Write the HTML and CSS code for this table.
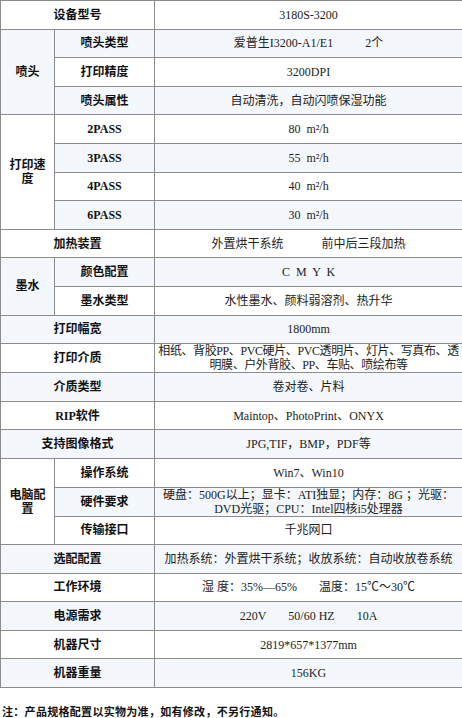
FILE: index.html
```html
<!DOCTYPE html>
<html lang="zh-CN">
<head>
<meta charset="utf-8">
<title>3180S-3200 参数</title>
<link rel="stylesheet" href="styles.css">
</head>
<body>
<div class="wrap">
<table class="spec">
<colgroup><col class="c1"><col class="c2"><col class="c3"></colgroup>
<tr><th colspan="2">设备型号</th><td>3180S-3200</td></tr>
<tr class="b"><th rowspan="3">喷头</th><th>喷头类型</th><td>爱普生I3200-A1/E1<span class="gap"></span>2个</td></tr>
<tr><th>打印精度</th><td>3200DPI</td></tr>
<tr class="b"><th>喷头属性</th><td>自动清洗，自动闪喷保湿功能</td></tr>
<tr><th rowspan="4" class="nar">打印速度</th><th>2PASS</th><td>80&nbsp;&nbsp;m²/h</td></tr>
<tr class="b"><th>3PASS</th><td>55&nbsp;&nbsp;m²/h</td></tr>
<tr><th>4PASS</th><td>40&nbsp;&nbsp;m²/h</td></tr>
<tr class="b"><th>6PASS</th><td>30&nbsp;&nbsp;m²/h</td></tr>
<tr><th colspan="2">加热装置</th><td>外置烘干系统<span class="gap2"></span>前中后三段加热</td></tr>
<tr class="b"><th rowspan="2">墨水</th><th>颜色配置</th><td class="cmyk">C M Y K</td></tr>
<tr><th>墨水类型</th><td>水性墨水、颜料弱溶剂、热升华</td></tr>
<tr class="b"><th colspan="2">打印幅宽</th><td>1800mm</td></tr>
<tr><th colspan="2">打印介质</th><td class="multi media">相纸、背胶PP、PVC硬片、PVC透明片、灯片、写真布、透明膜、户外背胶、PP、车贴、喷绘布等</td></tr>
<tr class="b"><th colspan="2">介质类型</th><td>卷对卷、片料</td></tr>
<tr><th colspan="2">RIP软件</th><td>Maintop、PhotoPrint、ONYX</td></tr>
<tr class="b"><th colspan="2">支持图像格式</th><td>JPG,TIF，BMP，PDF等</td></tr>
<tr><th rowspan="3" class="nar">电脑配置</th><th>操作系统</th><td>Win7、Win10</td></tr>
<tr class="b"><th>硬件要求</th><td class="multi">硬盘：500G以上；显卡：ATI独显；内存：8G ；光驱：DVD光驱；CPU：Intel四核i5处理器</td></tr>
<tr><th>传输接口</th><td>千兆网口</td></tr>
<tr class="b"><th colspan="2">选配配置</th><td>加热系统：外置烘干系统；收放系统：自动收放卷系统</td></tr>
<tr><th colspan="2">工作环境</th><td>湿&nbsp;度：35%—65%<span class="gap3"></span>温度：15℃～30℃</td></tr>
<tr class="b"><th colspan="2">电源需求</th><td>220V<span class="gap3"></span>50/60 HZ<span class="gap3"></span>10A</td></tr>
<tr><th colspan="2">机器尺寸</th><td>2819*657*1377mm</td></tr>
<tr class="b"><th colspan="2">机器重量</th><td>156KG</td></tr>
</table>
<p class="note">注：产品规格配置以实物为准，如有修改，不另行通知。</p>
</div>
</body>
</html>
```
FILE: styles.css
```css
html, body {
  margin: 0;
  padding: 0;
  background: #ffffff;
}
body {
  font-family: "Liberation Serif", "Noto Sans CJK SC", serif;
  color: #222222;
}
.wrap {
  width: 462px;
}
.spec {
  border-collapse: collapse;
  table-layout: fixed;
  width: 462px;
}
.c1 { width: 54px; }
.c2 { width: 100px; }
.c3 { width: 308px; }
.spec tr {
  height: 28.6px;
}
.spec th,
.spec td {
  border: 1px solid #8c8c8c;
  padding: 0 4px;
  font-size: 12px;
  line-height: 14px;
  text-align: center;
  vertical-align: middle;
}
.spec th {
  font-weight: bold;
  color: #111111;
}
.spec td {
  font-weight: normal;
}
.spec tr.b th,
.spec tr.b td {
  background: #f4f8fd;
}
.spec td.multi {
  padding: 0 1px;
}
.spec td.media {
  letter-spacing: -0.4px;
}
.gap { display: inline-block; width: 32px; }
.gap2 { display: inline-block; width: 38px; }
.gap3 { display: inline-block; width: 22px; }
.cmyk { word-spacing: 3px; }
.note {
  margin: 17px 0 0 2px;
  font-family: "Noto Sans CJK SC", sans-serif;
  font-weight: bold;
  font-size: 11px;
  line-height: 13px;
  letter-spacing: 0.3px;
  color: #111111;
}
```
